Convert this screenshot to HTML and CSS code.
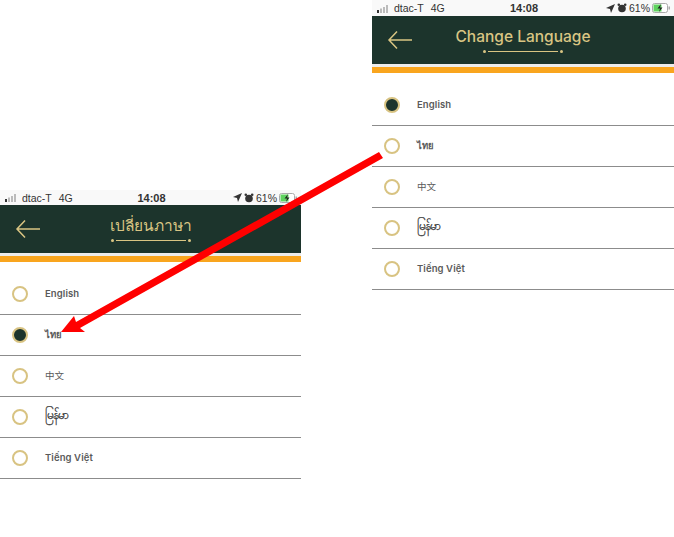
FILE: index.html
```html
<!DOCTYPE html>
<html lang="en">
<head>
  <meta charset="UTF-8">
  <meta name="viewport" content="width=device-width, initial-scale=1.0">
  <title>Change Language</title>
  <link rel="stylesheet" href="styles.css">
</head>
<body>
  <div class="phone phone-thai">
    <div class="status-bar">
      <div class="status-left">
        <svg class="signal" width="15" height="9" viewBox="0 0 15 9"><rect x="0" y="6" width="2" height="3" fill="#333"/><rect x="3" y="4.500" width="2" height="4.500" fill="#bbb"/><rect x="6" y="3" width="2" height="6" fill="#bbb"/><rect x="9" y="1" width="2" height="8" fill="#bbb"/></svg>
        <span>dtac-T</span>
        <span class="net">4G</span>
      </div>
      <div class="status-time">14:08</div>
      <div class="status-right">
        <svg width="9" height="9" viewBox="0 0 9 9"><path d="M9 0 L0 4 L4 5 L5 9 Z" fill="#333"/></svg>
        <svg width="10" height="10" viewBox="0 0 10 10"><circle cx="5" cy="5.500" r="3.800" fill="#333"/><circle cx="1.800" cy="1.800" r="1.300" fill="#333"/><circle cx="8.200" cy="1.800" r="1.300" fill="#333"/></svg>
        <span>61%</span>
        <svg width="19" height="10" viewBox="0 0 19 10"><rect x="0.500" y="0.500" width="15" height="9" rx="2" fill="#fff" stroke="#aaa"/><rect x="1.500" y="1.500" width="8" height="7" fill="#5fd35f"/><path d="M9 1 L5.500 5.500 H8 L7 9 L10.500 4.500 H8 Z" fill="#222"/><rect x="16.500" y="3.500" width="1.500" height="3" fill="#aaa"/></svg>
      </div>
    </div>
    <div class="app-header">
      <svg class="back" width="26" height="20" viewBox="0 0 26 20"><path d="M25 10 H2 M10 1.500 L2 10 L10 18.500" fill="none" stroke="#d9c583" stroke-width="1.500"/></svg>
      <div class="title-wrap">
        <div class="title">เปลี่ยนภาษา</div>
        <div class="title-rule"></div>
      </div>
    </div>
    <div class="stripe"></div>
    <ul class="lang-list">
      <li class="lang"><span class="radio"></span><span class="lang-name">English</span></li>
      <li class="lang"><span class="radio checked"></span><span class="lang-name">ไทย</span></li>
      <li class="lang"><span class="radio"></span><span class="lang-name lang-zh">中文</span></li>
      <li class="lang"><span class="radio"></span><span class="lang-name lang-my">မြန်မာ</span></li>
      <li class="lang"><span class="radio"></span><span class="lang-name">Tiếng Việt</span></li>
    </ul>
  </div>

  <div class="phone phone-english">
    <div class="status-bar">
      <div class="status-left">
        <svg class="signal" width="15" height="9" viewBox="0 0 15 9"><rect x="0" y="6" width="2" height="3" fill="#333"/><rect x="3" y="4.500" width="2" height="4.500" fill="#bbb"/><rect x="6" y="3" width="2" height="6" fill="#bbb"/><rect x="9" y="1" width="2" height="8" fill="#bbb"/></svg>
        <span>dtac-T</span>
        <span class="net">4G</span>
      </div>
      <div class="status-time">14:08</div>
      <div class="status-right">
        <svg width="9" height="9" viewBox="0 0 9 9"><path d="M9 0 L0 4 L4 5 L5 9 Z" fill="#333"/></svg>
        <svg width="10" height="10" viewBox="0 0 10 10"><circle cx="5" cy="5.500" r="3.800" fill="#333"/><circle cx="1.800" cy="1.800" r="1.300" fill="#333"/><circle cx="8.200" cy="1.800" r="1.300" fill="#333"/></svg>
        <span>61%</span>
        <svg width="19" height="10" viewBox="0 0 19 10"><rect x="0.500" y="0.500" width="15" height="9" rx="2" fill="#fff" stroke="#aaa"/><rect x="1.500" y="1.500" width="8" height="7" fill="#5fd35f"/><path d="M9 1 L5.500 5.500 H8 L7 9 L10.500 4.500 H8 Z" fill="#222"/><rect x="16.500" y="3.500" width="1.500" height="3" fill="#aaa"/></svg>
      </div>
    </div>
    <div class="app-header">
      <svg class="back" width="26" height="20" viewBox="0 0 26 20"><path d="M25 10 H2 M10 1.500 L2 10 L10 18.500" fill="none" stroke="#d9c583" stroke-width="1.500"/></svg>
      <div class="title-wrap">
        <div class="title">Change Language</div>
        <div class="title-rule"></div>
      </div>
    </div>
    <div class="stripe"></div>
    <ul class="lang-list">
      <li class="lang"><span class="radio checked"></span><span class="lang-name">English</span></li>
      <li class="lang"><span class="radio"></span><span class="lang-name">ไทย</span></li>
      <li class="lang"><span class="radio"></span><span class="lang-name lang-zh">中文</span></li>
      <li class="lang"><span class="radio"></span><span class="lang-name lang-my">မြန်မာ</span></li>
      <li class="lang"><span class="radio"></span><span class="lang-name">Tiếng Việt</span></li>
    </ul>
  </div>

  <svg class="arrow" width="674" height="537" viewBox="0 0 674 537"><path d="M379 152 L76 322 L74 316 L61 332 L85 332 L80 328 L383 158 Z" fill="#f00"/></svg>
</body>
</html>
```

FILE: styles.css
```css
* { box-sizing: border-box; }
body {
  margin: 0;
  width: 674px;
  height: 537px;
  position: relative;
  overflow: hidden;
  background: #fff;
  font-family: 'Inter', 'Noto Sans', 'DejaVu Sans', 'Noto Sans CJK SC', sans-serif;
  color: #333;
  display: flex;
  justify-content: space-between;
  align-items: flex-start;
}
.phone { width: 302px; }
.phone-thai { width: 301px; margin-top: 190px; }
.status-bar {
  height: 15px;
  background: #f9f9f9;
  display: grid;
  grid-template-columns: 1fr auto 1fr;
  align-items: center;
  padding: 0 3px 0 5px;
  font-family: 'Liberation Sans', sans-serif;
  font-size: 10.5px;
}
.phone-english .status-bar { height: 16px; }
.status-left, .status-right {
  display: flex;
  align-items: center;
  gap: 2px;
}
.status-right { justify-content: flex-end; }
.status-left .net { margin-left: 5px; }
.status-time {
  font-weight: 700;
  font-size: 11px;
}
.app-header {
  height: 48px;
  background: #1c342c;
  display: flex;
  align-items: center;
  justify-content: center;
  position: relative;
}
.back {
  position: absolute;
  left: 15px;
  top: 14px;
}
.title-wrap {
  display: flex;
  flex-direction: column;
  align-items: center;
  margin-bottom: 3px;
}
.title {
  color: #d9c583;
  font-size: 15.5px;
  font-weight: 500;
  line-height: 24px;
}
.title-rule {
  width: 70px;
  height: 1px;
  margin-top: 2px;
  background: #d9c583;
  position: relative;
}
.title-rule::before, .title-rule::after {
  content: "";
  position: absolute;
  top: -1px;
  width: 3px;
  height: 3px;
  border-radius: 50%;
  background: #d9c583;
}
.title-rule::before { left: -5px; }
.title-rule::after { right: -5px; }
.stripe {
  height: 9px;
  border-top: 3px solid #ececec;
  background: #f9a51e;
}
.lang-list {
  list-style: none;
  margin: 12px 0 0;
  padding: 0;
}
.lang {
  height: 41px;
  display: flex;
  align-items: center;
  gap: 17px;
  padding-left: 12px;
  font-size: 9.5px;
  font-weight: 600;
  letter-spacing: 0.1px;
  color: #5a5a5a;
  border-bottom: 1px solid #8c8c8c;
}
.lang-name { margin-bottom: 2px; }
.lang-zh { font-weight: 400; }
.lang-my {
  font-size: 12px;
  font-weight: 400;
  letter-spacing: 0;
  color: #333;
  -webkit-text-stroke: 0.25px #333;
}
.radio {
  width: 16px;
  height: 16px;
  border-radius: 50%;
  border: 2px solid #d8c382;
  flex: none;
}
.radio.checked { background: #1c342c; }
.arrow {
  position: absolute;
  left: 0;
  top: 0;
  pointer-events: none;
}
```
